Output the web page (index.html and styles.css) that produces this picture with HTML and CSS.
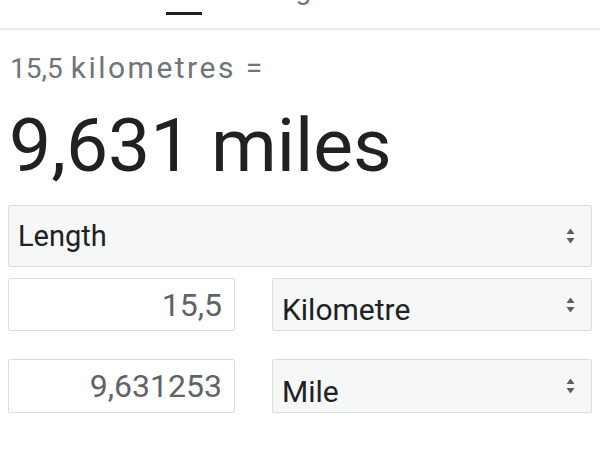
FILE: index.html
```html
<!DOCTYPE html>
<html lang="en">
<head>
<meta charset="utf-8">
<title>Unit converter</title>
<link rel="stylesheet" href="styles.css">
</head>
<body>
<nav class="tabs">
  <div class="tab active"><span class="tab-label">All</span><span class="tab-bar"></span></div>
  <div class="tab"><span class="tab-label">Images</span></div>
</nav>
<main class="converter">
  <div class="query"><span class="q-num">15,5</span> <span class="q-unit">kilometres =</span></div>
  <div class="result">9,631 miles</div>
  <div class="select category">
    <span class="select-text">Length</span>
    <svg class="arrows" width="9" height="16" viewBox="0 0 9 16"><path d="M0.5 6 L4.5 0.5 L8.5 6Z M0.5 10 L4.5 15.5 L8.5 10Z" fill="#5a5d61"/></svg>
  </div>
  <div class="unit-row">
    <div class="field">15,5</div>
    <div class="select unit">
      <span class="select-text">Kilometre</span>
      <svg class="arrows" width="9" height="16" viewBox="0 0 9 16"><path d="M0.5 6 L4.5 0.5 L8.5 6Z M0.5 10 L4.5 15.5 L8.5 10Z" fill="#5a5d61"/></svg>
    </div>
  </div>
  <div class="unit-row second">
    <div class="field">9,631253</div>
    <div class="select unit">
      <span class="select-text">Mile</span>
      <svg class="arrows" width="9" height="16" viewBox="0 0 9 16"><path d="M0.5 6 L4.5 0.5 L8.5 6Z M0.5 10 L4.5 15.5 L8.5 10Z" fill="#5a5d61"/></svg>
    </div>
  </div>
</main>
</body>
</html>
```

FILE: styles.css
```css
html, body {
  margin: 0;
  padding: 0;
  background: #fff;
  overflow: hidden;
}
body {
  font-family: Roboto, "Liberation Sans", Arial, sans-serif;
  color: #202124;
}
.tabs {
  display: flex;
  height: 28px;
  padding-left: 166px;
  gap: 46px;
  border-bottom: 2px solid #ebebeb;
}
.tab {
  display: flex;
  flex-direction: column;
}
.tab-label {
  font-size: 28px;
  line-height: 30px;
  height: 30px;
  margin-top: -25px;
  color: #70757a;
  white-space: nowrap;
}
.tab.active .tab-label {
  width: 36px;
  overflow: hidden;
  color: #202124;
}
.tab-bar {
  display: block;
  width: 36px;
  height: 3px;
  margin-top: 7px;
  background: #202124;
}
.converter {
  padding: 0 8px;
}
.query {
  font-size: 28px;
  line-height: 34px;
  margin-top: 21px;
  padding-left: 2px;
  color: #70757a;
  white-space: nowrap;
}
.q-unit {
  font-size: 30px;
  letter-spacing: 2.5px;
  margin-left: 1px;
}
.result {
  font-size: 75px;
  line-height: 80px;
  margin-top: 19px;
  padding-left: 1px;
  color: #202124;
  white-space: nowrap;
}
.select {
  display: flex;
  align-items: center;
  justify-content: space-between;
  box-sizing: border-box;
  background: #f6f7f7;
  border: 1px solid #dadce0;
  border-radius: 2px;
  color: #202124;
}
.category {
  height: 62px;
  margin-top: 20px;
  padding: 0 16px 0 9px;
  font-size: 29px;
}
.unit-row {
  display: flex;
  gap: 37px;
  margin-top: 11px;
  height: 53px;
}
.unit-row.second {
  margin-top: 28px;
  height: 54px;
}
.field {
  display: flex;
  align-items: center;
  justify-content: flex-end;
  box-sizing: border-box;
  width: 227px;
  border: 1px solid #dadce0;
  border-radius: 2px;
  padding: 0 12px 0 0;
  font-size: 32px;
  color: #5f6368;
}
.unit {
  flex: 1;
  padding: 0 16px 0 9px;
  font-size: 30px;
}
.unit .select-text {
  margin-top: 10px;
}
.arrows {
  flex: none;
}
```
